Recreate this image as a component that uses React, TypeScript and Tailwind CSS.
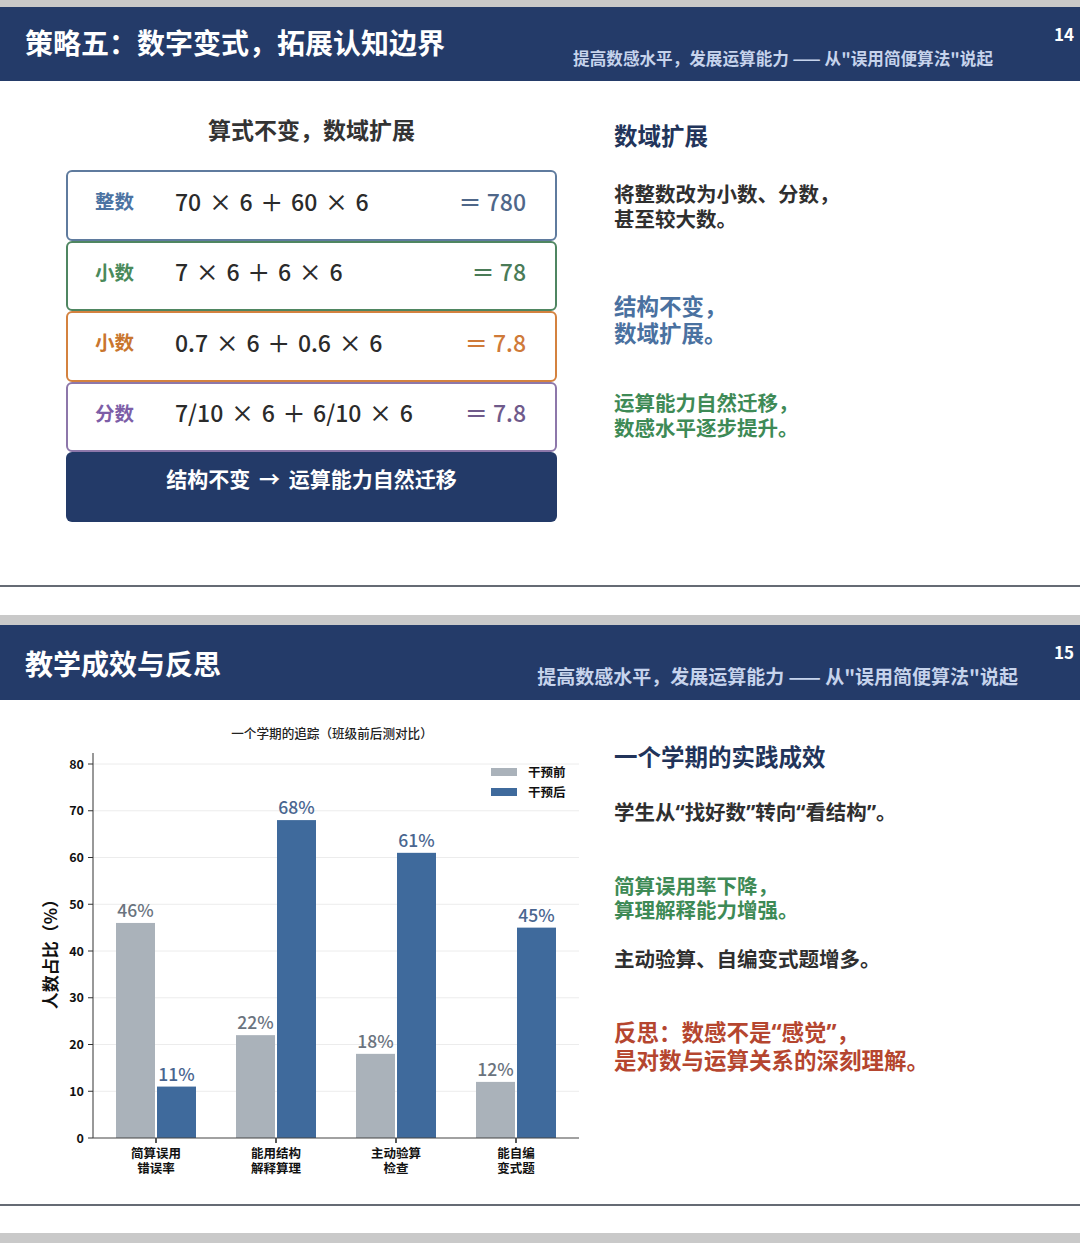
import * as React from 'react'

const FONT = "font-['Noto_Sans_CJK_SC','Noto_Sans',sans-serif]"

interface EqRow {
  label: string
  expr: string
  result: string
  border: string
  labelColor: string
  resultColor: string
}

const rows: EqRow[] = [
  { label: '整数', expr: '70 × 6 ＋ 60 × 6', result: '＝ 780', border: 'border-[#5f7b9e]', labelColor: 'text-[#4c73a2]', resultColor: 'text-[#4f6789]' },
  { label: '小数', expr: '7 × 6 ＋ 6 × 6', result: '＝ 78', border: 'border-[#4f8661]', labelColor: 'text-[#4a8a5b]', resultColor: 'text-[#4a7b57]' },
  { label: '小数', expr: '0.7 × 6 ＋ 0.6 × 6', result: '＝ 7.8', border: 'border-[#d4823f]', labelColor: 'text-[#c9762e]', resultColor: 'text-[#cf7a39]' },
  { label: '分数', expr: '7/10 × 6 ＋ 6/10 × 6', result: '＝ 7.8', border: 'border-[#8d77aa]', labelColor: 'text-[#7d5ea7]', resultColor: 'text-[#6f5a8b]' },
]

interface Group {
  name: [string, string]
  before: number
  after: number
}

const groups: Group[] = [
  { name: ['简算误用', '错误率'], before: 46, after: 11 },
  { name: ['能用结构', '解释算理'], before: 22, after: 68 },
  { name: ['主动验算', '检查'], before: 18, after: 61 },
  { name: ['能自编', '变式题'], before: 12, after: 45 },
]

// narrow latin quotes, as in the slides
function Q({ children }: { children: React.ReactNode }) {
  return <span className="font-['Noto_Sans',sans-serif]">{children}</span>
}

function SlideHeader({ title, page, subClass, numWidth, titleTop, subTop }: {
  title: string
  page: string
  subClass: string
  numWidth: string
  titleTop: string
  subTop: string
}) {
  return (
    <div className="flex bg-[#243b69] h-full">
      <h1 className={`pl-[25px] ${titleTop} text-[28px] leading-[34px] font-bold text-white`}>{title}</h1>
      <div className={`ml-auto ${subTop} ${subClass} font-bold text-[#c6d3ec] whitespace-nowrap`}>
        提高数感水平，发展运算能力 —— 从"误用简便算法"说起
      </div>
      <div className={`${numWidth} pr-[6px] pt-[17px] text-right text-[17px] leading-[20px] font-bold text-white`}>
        {page}
      </div>
    </div>
  )
}

function EquationCard({ row }: { row: EqRow }) {
  return (
    <div className={`h-[70.5px] border-2 ${row.border} rounded-[6px] bg-white flex items-center pl-[27px] pr-[29px] pb-[9px]`}>
      <span className={`w-[80px] text-[19.5px] font-bold ${row.labelColor}`}>{row.label}</span>
      <span className="flex-1 text-[23px] font-medium text-[#2b2b2b] whitespace-nowrap [word-spacing:2.5px]">{row.expr}</span>
      <span className={`text-[23px] font-medium ${row.resultColor} whitespace-nowrap`}>{row.result}</span>
    </div>
  )
}

function Chart() {
  const y = (v: number) => 438 - v * 4.675
  const ticks = [0, 10, 20, 30, 40, 50, 60, 70, 80]
  const centers = [156, 276, 396, 516]
  return (
    <svg width="614" height="504" viewBox="0 0 614 504" className="block">
      <text x="332" y="37.5" textAnchor="middle" fontSize="12.6" fontWeight="500" fill="#222">
        一个学期的追踪（班级前后测对比）
      </text>
      {ticks.slice(1).map((t) => (
        <line key={t} x1="93" x2="579" y1={y(t)} y2={y(t)} stroke="#ececec" strokeWidth="1" />
      ))}
      {ticks.map((t) => (
        <g key={t}>
          <line x1="88" x2="93" y1={y(t)} y2={y(t)} stroke="#333" strokeWidth="1" />
          <text x="84" y={y(t) + 4.5} textAnchor="end" fontSize="12.5" fontWeight="600" fill="#111">{t}</text>
        </g>
      ))}
      <text transform="translate(57 250) rotate(-90)" textAnchor="middle" fontSize="17" fontWeight="600" fill="#111">
        人数占比（%）
      </text>
      {groups.map((g, i) => {
        const c = centers[i]
        return (
          <g key={i}>
            <rect x={c - 40} y={y(g.before)} width="39" height={g.before * 4.675} fill="#aab2ba" />
            <rect x={c + 1} y={y(g.after)} width="39" height={g.after * 4.675} fill="#3f6a9c" />
            <text x={c - 20.5} y={y(g.before) - 6} textAnchor="middle" fontSize="17.5" fontWeight="500" fill="#6a737e">{g.before}%</text>
            <text x={c + 20.5} y={y(g.after) - 6} textAnchor="middle" fontSize="17.5" fontWeight="500" fill="#4a6690">{g.after}%</text>
            <line x1={c} x2={c} y1="438" y2="443" stroke="#222" strokeWidth="1.5" />
            <text x={c} y="457.5" textAnchor="middle" fontSize="12.5" fontWeight="600" fill="#111">{g.name[0]}</text>
            <text x={c} y="473" textAnchor="middle" fontSize="12.5" fontWeight="600" fill="#111">{g.name[1]}</text>
          </g>
        )
      })}
      <line x1="93" x2="93" y1="53" y2="438" stroke="#333" strokeWidth="1" />
      <line x1="93" x2="579" y1="438" y2="438" stroke="#444" strokeWidth="1.2" />
      <rect x="491" y="68" width="26" height="8" fill="#aab2ba" />
      <text x="528" y="76.5" fontSize="12.5" fontWeight="600" fill="#111">干预前</text>
      <rect x="491" y="88" width="26" height="8" fill="#3f6a9c" />
      <text x="528" y="96.5" fontSize="12.5" fontWeight="600" fill="#111">干预后</text>
    </svg>
  )
}

export default function App() {
  return (
    <div className={`${FONT} w-[1080px] bg-white`}>
      {/* slide 14 */}
      <div className="h-[7px] bg-[#c9c9c9]" />
      <div className="h-[74px]">
        <SlideHeader
          title="策略五：数字变式，拓展认知边界"
          page="14"
          subClass="text-[16.6px] leading-[20px]"
          numWidth="w-[87px]"
          titleTop="pt-[18px]"
          subTop="pt-[41px]"
        />
      </div>
      <div className="h-[504px] flex">
        <div className="w-[614px] pl-[66px]">
          <div className="w-[491px]">
            <h2 className="pt-[33px] text-center text-[23px] leading-[30px] font-bold text-[#333]">算式不变，数域扩展</h2>
            <div className="mt-[26px] flex flex-col">
              {rows.map((r, i) => (
                <EquationCard key={i} row={r} />
              ))}
              <div className="h-[70px] rounded-[6px] bg-[#233a68] flex items-center justify-center pb-4">
                <span className="text-[21px] font-bold text-white [word-spacing:4px]">结构不变 → 运算能力自然迁移</span>
              </div>
            </div>
          </div>
        </div>
        <div className="flex-1 pt-[39px] text-[20.5px] leading-[24.6px] font-bold">
          <h3 className="text-[23.5px] leading-[30px] text-[#22345a]">数域扩展</h3>
          <p className="mt-[31px] text-[#2f2f2f]">将整数改为小数、分数，<br />甚至较大数。</p>
          <p className="mt-[62px] text-[22.5px] leading-[27px] text-[#4a71a0]">结构不变，<br />数域扩展。</p>
          <p className="mt-[44px] text-[#3e8a56]">运算能力自然迁移，<br />数感水平逐步提升。</p>
        </div>
      </div>
      <div className="h-[2px] bg-[#656b74]" />
      <div className="h-[28px]" />

      {/* slide 15 */}
      <div className="h-[10px] bg-[#c9c9c9]" />
      <div className="h-[75px]">
        <SlideHeader
          title="教学成效与反思"
          page="15"
          subClass="text-[19px] leading-[23px]"
          numWidth="w-[62px]"
          titleTop="pt-[21px]"
          subTop="pt-[39px]"
        />
      </div>
      <div className="h-[504px] flex">
        <div className="w-[614px]">
          <Chart />
        </div>
        <div className="flex-1 pt-[41px] text-[20.5px] leading-[24.6px] font-bold">
          <h3 className="text-[23.5px] leading-[30px] text-[#22345a]">一个学期的实践成效</h3>
          <p className="mt-[28px] text-[#2f2f2f]">学生从<Q>“</Q>找好数<Q>”</Q>转向<Q>“</Q>看结构<Q>”</Q>。</p>
          <p className="mt-[48px] text-[#3e8a56]">简算误用率下降，<br />算理解释能力增强。</p>
          <p className="mt-[24px] text-[#2f2f2f]">主动验算、自编变式题增多。</p>
          <p className="mt-[48px] text-[22.5px] leading-[27px] text-[#b5462f]">反思：数感不是<Q>“</Q>感觉<Q>”</Q>，<br />是对数与运算关系的深刻理解。</p>
        </div>
      </div>
      <div className="h-[2px] bg-[#656b74]" />
      <div className="h-[27px]" />
      <div className="h-[10px] bg-[#c9c9c9]" />
    </div>
  )
}
